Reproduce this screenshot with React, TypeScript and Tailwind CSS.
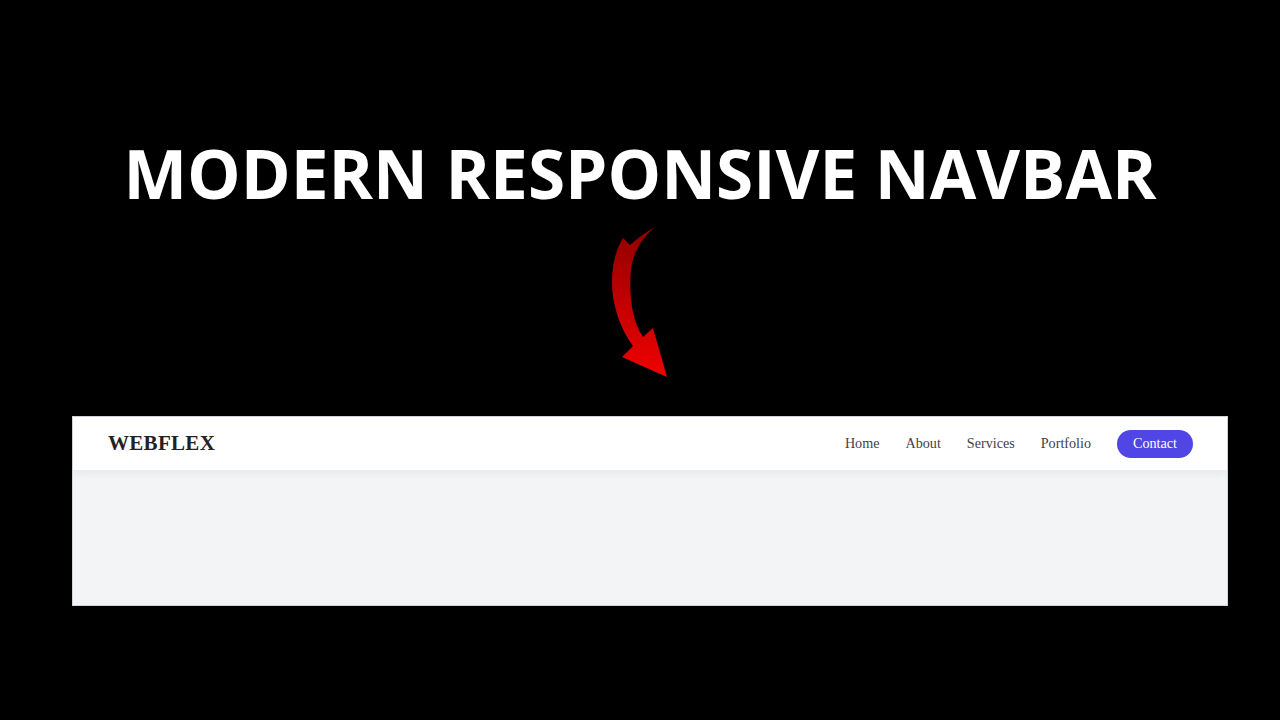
export default function App() {
  const links = ["Home", "About", "Services", "Portfolio"];

  return (
    <div className="w-[1280px] h-[720px] bg-black overflow-hidden flex flex-col">
      <h1 className="pt-[133px] text-center text-white text-[67.5px] leading-[80px] font-bold font-['Open_Sans',sans-serif]">
        MODERN RESPONSIVE NAVBAR
      </h1>

      <div className="ml-[600px] mt-[7px] h-[162px]">
        <svg width="72" height="162" viewBox="0 0 72 162">
          <defs>
            <linearGradient id="arrowRed" x1="0" y1="0" x2="0" y2="1">
              <stop offset="0" stopColor="#900000" />
              <stop offset="0.5" stopColor="#c20000" />
              <stop offset="1" stopColor="#f00000" />
            </linearGradient>
          </defs>
          <path
            d="M55,7 C42,18 33,32 31,50 C29,72 31,100 43,117 L53,108 L67,157 L22,137 L33,126 C20,108 12,85 12,62 C12,42 17,28 23,18 L30,25 C38,18 46,12 55,7 Z"
            fill="url(#arrowRed)"
          />
        </svg>
      </div>

      <div className="ml-[72px] mt-[34px] w-[1156px] h-[190px] bg-[#f3f4f6] border border-[#d1d5db] flex flex-col">
        <nav className="h-[53px] bg-white shadow-[0_3px_8px_rgba(0,0,0,0.06)] flex items-center justify-between pl-[35px] pr-[34px] font-['Liberation_Serif',serif]">
          <div className="text-[21px] font-bold text-[#222] tracking-[0.3px]">WEBFLEX</div>
          <div className="flex items-center gap-[26px] text-[14.15px] text-[#3f3f46]">
            {links.map((l) => (
              <a key={l} href="#" className="hover:text-[#4f46e5]">
                {l}
              </a>
            ))}
            <a
              href="#"
              className="bg-[#4f46e5] text-white rounded-full px-4 h-[28px] flex items-center"
            >
              Contact
            </a>
          </div>
        </nav>
      </div>
    </div>
  );
}
